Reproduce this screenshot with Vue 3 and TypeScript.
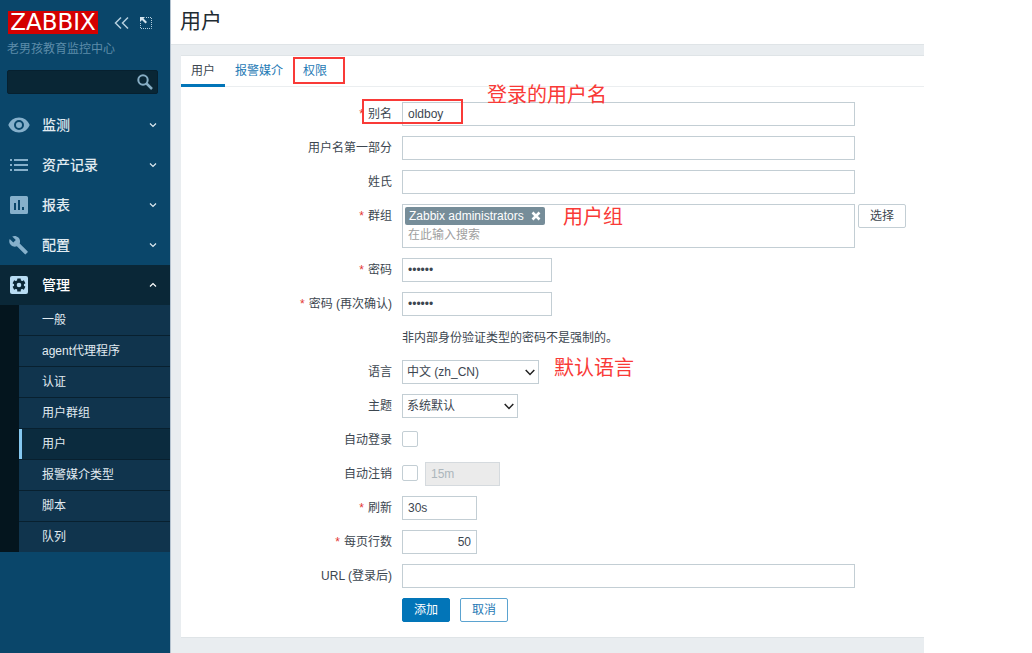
<script setup lang="ts">
import { ref } from 'vue'

interface MenuItem {
  label: string
  icon: string
  open?: boolean
}

const menu: MenuItem[] = [
  { label: '监测', icon: 'eye' },
  { label: '资产记录', icon: 'list' },
  { label: '报表', icon: 'chart' },
  { label: '配置', icon: 'wrench' },
  { label: '管理', icon: 'gear', open: true },
]

const submenu: string[] = ['一般', 'agent代理程序', '认证', '用户群组', '用户', '报警媒介类型', '脚本', '队列']
const current = '用户'

const search = ref('')
const alias = ref('oldboy')
const firstName = ref('')
const surname = ref('')
const groupSearch = ref('')
const password = ref('secret')
const passwordRepeat = ref('secret')
const language = ref('zh_CN')
const theme = ref('default')
const autoLogin = ref(false)
const autoLogout = ref(false)
const logoutTime = ref('15m')
const refresh = ref('30s')
const rows = ref('50')
const url = ref('')
</script>

<template>
  <div class="page">
    <aside class="sidebar">
      <header class="brand">
        <a href="#" class="logo">ZABBIX</a>
        <button type="button" class="tool" aria-label="collapse">
          <svg width="16" height="14" viewBox="0 0 16 14"><path d="M7 1.500L1.500 7L7 12.500M14 1.500L8.500 7L14 12.500" fill="none" stroke="#b5cfdf" stroke-width="1.500" /></svg>
        </button>
        <button type="button" class="tool" aria-label="hide">
          <svg width="14" height="14" viewBox="0 0 14 14">
            <path d="M7 1.500H12.500V12.500H1.500V7" fill="none" stroke="#b5cfdf" stroke-dasharray="1 1" />
            <path d="M1 1H6L4.500 2.500L8 6L6.500 7.500L3 4L1 6Z" fill="#d4e4ee" />
          </svg>
        </button>
      </header>
      <div class="server">老男孩教育监控中心</div>
      <form class="search" @submit.prevent>
        <input v-model="search" type="text" aria-label="search">
        <button type="submit" aria-label="go">
          <svg width="16" height="16" viewBox="0 0 16 16"><circle cx="6" cy="6" r="4.700" fill="none" stroke="#86adc4" stroke-width="2" /><path d="M9.500 9.500L15 15" stroke="#86adc4" stroke-width="2.500" /></svg>
        </button>
      </form>

      <nav>
        <a v-for="item in menu" :key="item.label" href="#" class="item" :class="{ open: item.open }">
          <svg v-if="item.icon === 'eye'" class="icon" viewBox="0 0 22 20"><path fill-rule="evenodd" d="M11 2.500C6 2.500 2 5.500 .3 10C2 14.500 6 17.500 11 17.500S20 14.500 21.700 10C20 5.500 16 2.500 11 2.500ZM11 15A5 5 0 1 1 11 5A5 5 0 0 1 11 15ZM11 7A3 3 0 1 0 11 13A3 3 0 0 0 11 7Z" /></svg>
          <svg v-else-if="item.icon === 'list'" class="icon" viewBox="0 0 22 20"><path d="M2 4h2v2H2zM6 4h14v2H6zM2 9h2v2H2zM6 9h14v2H6zM2 14h2v2H2zM6 14h14v2H6z" /></svg>
          <svg v-else-if="item.icon === 'chart'" class="icon" viewBox="0 0 22 20"><path fill-rule="evenodd" d="M3.500 1H18.500Q20 1 20 2.500V17.500Q20 19 18.500 19H3.500Q2 19 2 17.500V2.500Q2 1 3.500 1ZM6 8V15H8V8ZM10 5V15H12V5ZM14 12V15H16V12Z" /></svg>
          <svg v-else-if="item.icon === 'wrench'" class="icon" viewBox="0 0 22 20"><path d="M19.500 16.300L11.700 8.500C12.500 6.500 12 4.100 10.400 2.500C8.700 .8 6.200 .5 4.200 1.400L7.800 5L5.300 7.500L1.700 3.900C.8 5.900 1.200 8.400 2.900 10.100C4.500 11.700 6.900 12.100 8.900 11.300L16.700 19.100C17.100 19.500 17.600 19.500 17.900 19.100L19.500 17.500C19.900 17.100 19.900 16.600 19.500 16.300Z" /></svg>
          <svg v-else class="icon" viewBox="0 0 22 20">
            <rect x="2" y="1" width="18" height="18" rx="2" />
            <g fill="#0a2737"><circle cx="11" cy="10" r="5" /><rect v-for="a in [0, 60, 120]" :key="a" x="9.200" y="3.500" width="3.600" height="13" rx=".5" :transform="`rotate(${a} 11 10)`" /></g>
            <circle cx="11" cy="10" r="2.300" />
          </svg>
          <span>{{ item.label }}</span>
          <svg class="arrow" width="8" height="6" viewBox="0 0 8 6"><path :d="item.open ? 'M1 4.500L4 1.500L7 4.500' : 'M1 1.500L4 4.500L7 1.500'" fill="none" stroke="currentColor" stroke-width="1.200" /></svg>
        </a>
        <ul class="submenu">
          <li v-for="name in submenu" :key="name"><a href="#" :class="{ current: name === current }">{{ name }}</a></li>
        </ul>
      </nav>
    </aside>

    <main>
      <h1>用户</h1>
      <div class="body">
        <form class="panel" @submit.prevent>
          <div class="tabs">
            <a href="#" class="active">用户</a>
            <a href="#">报警媒介</a>
            <a href="#">权限<i class="mark mark-tab"></i></a>
          </div>

          <div class="fields">
            <label class="req" for="alias">别名</label>
            <div class="cell">
              <input id="alias" v-model="alias" type="text" class="wide">
              <i class="mark mark-alias"></i>
              <span class="note note-alias">登录的用户名</span>
            </div>

            <label for="first">用户名第一部分</label>
            <div class="cell"><input id="first" v-model="firstName" type="text" class="wide"></div>

            <label for="surname">姓氏</label>
            <div class="cell"><input id="surname" v-model="surname" type="text" class="wide"></div>

            <label class="req" for="groups">群组</label>
            <div class="cell">
              <div class="multi wide">
                <span class="tag">Zabbix administrators
                  <button type="button" aria-label="remove"><svg width="10" height="10" viewBox="0 0 10 10"><path d="M1.500 1.500L8.500 8.500M8.500 1.500L1.500 8.500" stroke="#fff" stroke-width="2.600" /></svg></button>
                </span>
                <input id="groups" v-model="groupSearch" type="text" placeholder="在此输入搜索">
              </div>
              <button type="button" class="btn select-btn">选择</button>
              <span class="note note-group">用户组</span>
            </div>

            <label class="req" for="pw">密码</label>
            <div class="cell"><input id="pw" v-model="password" type="password" class="medium"></div>

            <label class="req" for="pw2">密码 (再次确认)</label>
            <div class="cell"><input id="pw2" v-model="passwordRepeat" type="password" class="medium"></div>

            <div class="cell text">非内部身份验证类型的密码不是强制的。</div>

            <label for="lang">语言</label>
            <div class="cell">
              <div class="drop lang">
                <select id="lang" v-model="language"><option value="zh_CN">中文 (zh_CN)</option></select>
                <svg width="10" height="7" viewBox="0 0 10 7"><path d="M.7 1L5 5.500L9.300 1" fill="none" stroke="#222" stroke-width="1.500" /></svg>
              </div>
              <span class="note note-lang">默认语言</span>
            </div>

            <label for="theme">主题</label>
            <div class="cell">
              <div class="drop theme">
                <select id="theme" v-model="theme"><option value="default">系统默认</option></select>
                <svg width="10" height="7" viewBox="0 0 10 7"><path d="M.7 1L5 5.500L9.300 1" fill="none" stroke="#222" stroke-width="1.500" /></svg>
              </div>
            </div>

            <label for="autologin">自动登录</label>
            <div class="cell"><input id="autologin" v-model="autoLogin" type="checkbox"></div>

            <label for="autologout">自动注销</label>
            <div class="cell gap">
              <input id="autologout" v-model="autoLogout" type="checkbox">
              <input v-model="logoutTime" type="text" class="small" aria-label="time" :disabled="!autoLogout">
            </div>

            <label class="req" for="refresh">刷新</label>
            <div class="cell"><input id="refresh" v-model="refresh" type="text" class="small"></div>

            <label class="req" for="rows">每页行数</label>
            <div class="cell"><input id="rows" v-model="rows" type="text" class="small number"></div>

            <label for="url">URL (登录后)</label>
            <div class="cell"><input id="url" v-model="url" type="text" class="wide"></div>

            <div class="cell actions">
              <button type="submit" class="btn primary">添加</button>
              <button type="button" class="btn outline">取消</button>
            </div>
          </div>
        </form>
      </div>
    </main>
  </div>
</template>

<style>
body {
  background: #fff;
}
</style>

<style scoped>
* {
  box-sizing: border-box;
}
.page {
  display: flex;
  min-height: 100vh;
  padding-right: 108px;
  font: 12px/18px "Liberation Sans", Arial, "Noto Sans CJK SC", sans-serif;
  color: #3c4650;
}
a {
  text-decoration: none;
}
button,
input,
select {
  font: inherit;
  color: inherit;
}
.sidebar {
  flex: 0 0 170px;
  min-width: 0;
  background: #0a466a;
}
.brand {
  display: flex;
  align-items: center;
  padding: 11px 16px 0 8px;
}
.logo {
  flex: 0 0 90px;
  margin-right: 16px;
  background: #d40000;
  color: #fff;
  font: 23px/23px "DejaVu Sans", sans-serif;
  text-align: center;
}
.tool {
  display: flex;
  flex: none;
  margin-right: 9px;
  padding: 0;
  border: 0;
  background: none;
}
.tool:last-child {
  margin-right: 0;
}
.server {
  padding: 6px 7px 0;
  color: #5d8ca9;
}
.search {
  display: flex;
  align-items: center;
  height: 24px;
  margin: 12px 12px 0 7px;
  border: 1px solid #06202f;
  border-radius: 2px;
  background: #092635;
}
.search input {
  flex: 1;
  width: 0;
  min-width: 0;
  padding: 0 5px;
  border: 0;
  background: none;
  color: #fff;
}
.search button {
  display: flex;
  flex: none;
  padding: 0 4px;
  border: 0;
  background: none;
}
nav {
  margin-top: 11px;
}
.item {
  display: flex;
  align-items: center;
  height: 40px;
  padding: 0 13px 0 8px;
  color: #e1ebf1;
  font-size: 14px;
  font-weight: 500;
}
.item.open {
  background: #0a2737;
  color: #fff;
}
.icon {
  width: 22px;
  height: 20px;
  margin-right: 12px;
  fill: #86b0cb;
}
.open .icon {
  fill: #b8dcf3;
}
.arrow {
  margin-left: auto;
}
.submenu {
  margin: 0;
  padding: 0 0 0 19px;
  background: #04151e;
  list-style: none;
}
.submenu li + li {
  border-top: 1px solid #08202f;
}
.submenu a {
  display: block;
  height: 30px;
  padding-left: 20px;
  border-left: 3px solid #10344d;
  background: #10344d;
  color: #e1ebf1;
  line-height: 30px;
}
.submenu .current {
  border-color: #85c8f0;
  background: #0b2b3e;
}
main {
  display: flex;
  flex: 1;
  flex-direction: column;
  min-width: 0;
  border-left: 1px solid #b5c3d0;
  background: #e9edf0;
}
h1 {
  height: 44px;
  margin: 0;
  padding-left: 9px;
  background: #fff;
  color: #1f2c33;
  font-size: 21px;
  font-weight: 400;
  line-height: 42px;
}
.body {
  padding: 10px 0 0 10px;
  border-top: 1px solid #dfe4e7;
}
.panel {
  padding-bottom: 15px;
  border: solid #dfe4e7;
  border-width: 1px 0;
  background: #fff;
}
.tabs {
  display: flex;
  height: 31px;
  border-bottom: 1px solid #ebeef0;
}
.tabs a {
  position: relative;
  height: 31px;
  padding: 0 10px;
  color: #1f7ab5;
  line-height: 31px;
}
.tabs .active {
  border-bottom: 3px solid #0275b8;
  color: #3c4650;
}
.fields {
  display: grid;
  grid-template-columns: 211px 1fr;
  gap: 10px;
  padding-top: 15px;
}
.fields label {
  line-height: 24px;
  text-align: right;
}
.req::before {
  margin-right: 4px;
  color: #e33734;
  content: "*";
}
.cell {
  position: relative;
  display: flex;
  grid-column: 2;
  align-items: flex-start;
  min-height: 24px;
}
.text {
  line-height: 24px;
}
.gap {
  gap: 7px;
}
.cell > input,
.drop select {
  height: 24px;
  margin: 0;
  padding: 0 5px;
  border: 1px solid #c3ced4;
  border-radius: 0;
  background: #fff;
}
.cell > .wide {
  width: 453px;
}
.cell > .medium {
  width: 150px;
}
.cell > .small {
  width: 75px;
}
.cell > .number {
  text-align: right;
}
.cell > input:disabled {
  border-color: #d5dade;
  background: #ebebeb;
  color: #acb6bc;
}
.cell > input[type="checkbox"] {
  width: 16px;
  height: 16px;
  margin-top: 3px;
  padding: 0;
  border-radius: 2px;
  appearance: none;
}
.multi {
  height: 44px;
  padding: 2px;
  border: 1px solid #c3ced4;
}
.tag {
  display: inline-flex;
  align-items: center;
  gap: 7px;
  height: 18px;
  padding: 0 4px;
  border-radius: 2px;
  background: #768d99;
  color: #fff;
  vertical-align: top;
}
.tag button {
  display: flex;
  padding: 0;
  border: 0;
  background: none;
}
.multi input {
  display: block;
  width: 100%;
  height: 20px;
  padding: 0 3px;
  border: 0;
}
.multi input::placeholder {
  color: #a0a0a0;
}
.btn {
  flex: none;
  width: 48px;
  height: 24px;
  padding: 0;
  border: 1px solid #c3ced4;
  border-radius: 2px;
  background: #fff;
}
.select-btn {
  margin-left: 3px;
}
.actions {
  gap: 10px;
}
.primary {
  border-color: #0275b8;
  background: #0275b8;
  color: #fff;
}
.outline {
  border-color: #5ba3d0;
  color: #1f7ab5;
}
.drop {
  display: flex;
  position: relative;
}
.drop select {
  width: 100%;
  padding: 0 4px;
  appearance: none;
}
.drop svg {
  position: absolute;
  top: 9px;
  right: 4px;
  pointer-events: none;
}
.lang {
  width: 137px;
}
.theme {
  width: 116px;
}
.mark {
  position: absolute;
  border: 2px solid #f93a37;
  pointer-events: none;
}
.mark-tab {
  top: 1px;
  left: 0;
  width: 52px;
  height: 27px;
}
.mark-alias {
  top: -3px;
  left: -40px;
  width: 101px;
  height: 25px;
}
.note {
  position: absolute;
  color: #f93a37;
  font-size: 20px;
  line-height: 24px;
  white-space: nowrap;
}
.note-alias {
  top: -19px;
  left: 85px;
}
.note-group {
  top: 1px;
  left: 161px;
}
.note-lang {
  top: -4px;
  left: 152px;
}
</style>
